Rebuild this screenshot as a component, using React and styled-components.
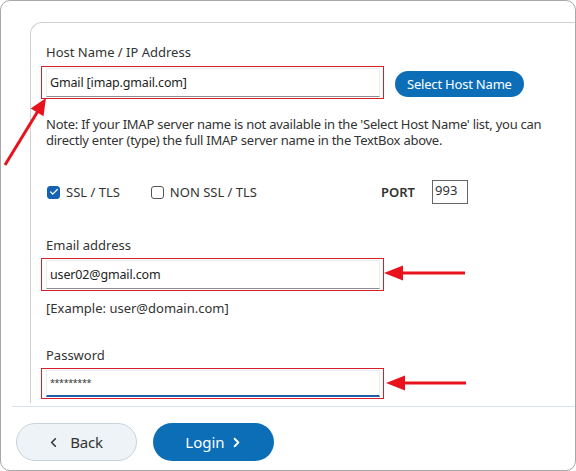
import React from 'react';
import styled, { createGlobalStyle } from 'styled-components';
import { ChevronLeft, ChevronRight, Check } from 'lucide-react';

const Global = createGlobalStyle`
    body {
        margin: 0;
        background: #fff;
        font-family: "Noto Sans", "Open Sans", sans-serif;
        color: #333;
    }
    * { box-sizing: border-box; }
`;

export default function App() {
    return (
        <>
            <Global />
            <Window>
                <Panel>
                    <Label>Host Name / IP Address</Label>
                    <HostRow>
                        <Highlight>
                            <Field>Gmail [imap.gmail.com]</Field>
                        </Highlight>
                        <PillButton>Select Host Name</PillButton>
                    </HostRow>
                    <Note>
                        Note: If your IMAP server name is not available in the 'Select Host Name' list, you can
                        directly enter (type) the full IMAP server name in the TextBox above.
                    </Note>
                    <OptionRow>
                        <Option>
                            <Box checked><Check size={10} strokeWidth={3} color="#fff" /></Box>
                            SSL / TLS
                        </Option>
                        <Option>
                            <Box />
                            NON SSL / TLS
                        </Option>
                        <Port>PORT</Port>
                        <PortInput>993</PortInput>
                    </OptionRow>
                    <Label top={32}>Email address</Label>
                    <Highlight top={4}>
                        <Field>user02@gmail.com</Field>
                    </Highlight>
                    <Hint>[Example: user@domain.com]</Hint>
                    <Label top={30}>Password</Label>
                    <Highlight top={4} short>
                        <Field focused><Masked>*********</Masked></Field>
                    </Highlight>
                </Panel>
                <Footer>
                    <BackButton><ChevronLeft size={15} strokeWidth={2.5} />Back</BackButton>
                    <LoginButton>Login<ChevronRight size={15} strokeWidth={3} /></LoginButton>
                </Footer>
                <Arrows width="576" height="471">
                    <line x1="5" y1="165" x2="38" y2="111" />
                    <polygon points="46,98 43.5,116.3 30.7,108.4" />
                    <line x1="465" y1="273" x2="398" y2="273" />
                    <polygon points="384,273 403,265.5 403,280.5" />
                    <line x1="466" y1="383" x2="400" y2="383" />
                    <polygon points="386,383 405,375.5 405,390.5" />
                </Arrows>
            </Window>
        </>
    );
}

const Window = styled.div`
    position: relative;
    width: 576px;
    height: 471px;
    border: 1.5px solid #a8a8a8;
    border-radius: 10px;
    overflow: hidden;
    padding-top: 21px;
    display: flex;
    flex-direction: column;
`;

const Panel = styled.div`
    margin-left: 29px;
    height: 381px;
    border-top: 1px solid #cfcfcf;
    border-left: 1px solid #cfcfcf;
    border-top-left-radius: 12px;
    padding: 20px 0 0 15px;
    display: flex;
    flex-direction: column;
    align-items: flex-start;
`;

const Label = styled.div`
    font-size: 13px;
    line-height: 18px;
    color: #333;
    margin-top: ${p => p.top || 0}px;
`;

const HostRow = styled.div`
    display: flex;
    align-items: center;
    gap: 11px;
    margin-top: 5px;
`;

const Highlight = styled.div`
    width: 343px;
    height: ${p => p.short ? 31 : 33}px;
    border: 1.5px solid #d4202c;
    padding: 1px 3px 1px 4px;
    margin-left: -5px;
    margin-top: ${p => p.top || 0}px;
    display: flex;
`;

const Field = styled.div`
    flex: 1;
    background: #fff;
    border: 1px solid #ececec;
    border-bottom: ${p => p.focused ? '2px solid #1d5fa9' : '1px solid #8c8c8c'};
    font-size: 12.5px;
    letter-spacing: -0.15px;
    color: #222;
    padding: 0 3px;
    display: flex;
    align-items: center;
`;

const Masked = styled.span`
    font-size: 9px;
    letter-spacing: -0.4px;
    color: #333;
    margin-top: -2px;
`;

const PillButton = styled.button`
    height: 26px;
    padding: 0 12px;
    border: none;
    border-radius: 13px;
    background: #0b6eb6;
    color: #fff;
    font-family: inherit;
    font-size: 13px;
    letter-spacing: -0.2px;
    margin-top: 3px;
`;

const Note = styled.p`
    margin: 17px 0 0;
    font-size: 13px;
    letter-spacing: -0.25px;
    line-height: 16px;
    color: #333;
    width: 515px;
`;

const OptionRow = styled.div`
    display: flex;
    align-items: center;
    margin-top: 32px;
    height: 24px;
    margin-left: 1px;
`;

const Option = styled.label`
    display: flex;
    align-items: center;
    gap: 6px;
    font-size: 13px;
    margin-right: 31px;
`;

const Box = styled.span`
    width: 13px;
    height: 13px;
    border-radius: 3px;
    border: 1px solid ${p => p.checked ? '#1462b3' : '#555'};
    background: ${p => p.checked ? '#1462b3' : '#fff'};
    display: flex;
    align-items: center;
    justify-content: center;
`;

const Port = styled.span`
    font-size: 13px;
    font-weight: 600;
    margin-left: 93px;
    width: 51px;
`;

const PortInput = styled.div`
    width: 36px;
    height: 24px;
    border: 1px solid #666;
    font-size: 13px;
    padding: 1px 2px 0;
    line-height: 16px;
`;

const Hint = styled.div`
    font-size: 13px;
    line-height: 16px;
    margin-top: 9px;
`;

const Footer = styled.div`
    margin-left: 11px;
    margin-top: 3px;
    border-top: 1px solid #d5e4e8;
    padding: 16px 0 0 4px;
    display: flex;
    gap: 16px;
`;

const BaseButton = styled.button`
    width: 121px;
    height: 38px;
    border-radius: 19px;
    font-family: inherit;
    font-size: 15px;
    display: flex;
    align-items: center;
    justify-content: center;
    gap: 9px;
`;

const BackButton = styled(BaseButton)`
    background: #eef3f7;
    border: 1px solid #c6d2dc;
    color: #333;
    padding-right: 10px;
    letter-spacing: -0.2px;
`;

const LoginButton = styled(BaseButton)`
    background: #0b6eb6;
    border: none;
    color: #fff;
    gap: 4px;
    padding-left: 8px;
`;

const Arrows = styled.svg`
    position: absolute;
    left: -1.5px;
    top: -1.5px;
    pointer-events: none;
    line { stroke: #e8121c; stroke-width: 3; }
    polygon { fill: #e8121c; }
`;
